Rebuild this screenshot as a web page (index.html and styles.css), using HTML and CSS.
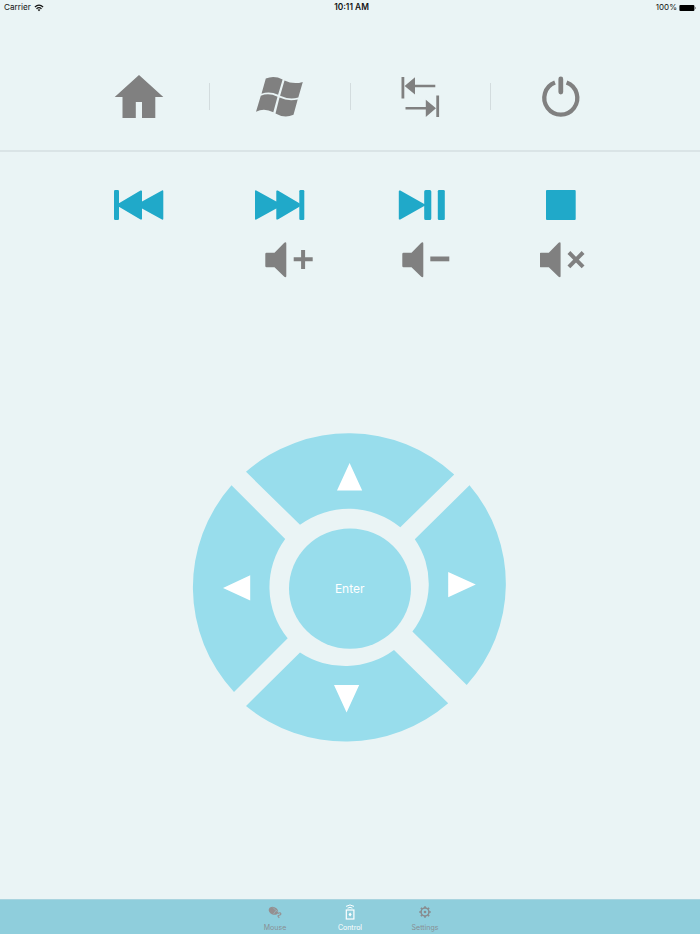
FILE: index.html
```html
<!DOCTYPE html>
<html lang="en">
<head>
<meta charset="utf-8">
<title>Remote Control</title>
<link rel="stylesheet" href="styles.css">
</head>
<body>
<div class="app">
  <header class="status">
    <div class="status-left"><span>Carrier</span>
      <svg class="wifi" viewBox="0 0 10 8"><g fill="none" stroke="#111" stroke-width="1.2"><path d="M.9 3Q5-.8 9.1 3M2.5 4.7Q5 2.4 7.5 4.7"/></g><path d="M3.6 5.8Q5 4.7 6.4 5.8L5 7.3z" fill="#111"/></svg>
    </div>
    <span class="time">10:11 AM</span>
    <div class="status-right"><span>100%</span>
      <svg class="battery" viewBox="0 0 18 8"><rect x=".4" y="1" width="15" height="6" rx="1"/><path d="M16 2.8q1.2 1.2 0 2.4z"/></svg>
    </div>
  </header>

  <nav class="toolbar">
    <button class="tool"><svg viewBox="0 0 50 44"><path d="M25 0L49.300 22H41.300V43H28V27H21.800V43H8.500V22H.7z"/></svg></button>
    <button class="tool"><svg viewBox="0 0 50 44"><path d="M10.800 3.600Q19 .2 27.600 4.400L23.100 19.800Q14.500 15.600 6.500 18.800z"/><path d="M29.500 5.500Q38.500 9.800 47.800 6.900L43.300 22.600Q34 25 25.100 20.800z"/><path d="M5.800 20.700Q14 17.500 22.500 21.700L18.300 37.300Q9.500 32.600 1 36.700z"/><path d="M24.500 22.600Q33.500 26.700 42.700 24.400L38.500 39.800Q29.500 43.800 20.500 38.500z"/></svg></button>
    <button class="tool"><svg viewBox="0 0 50 44"><path d="M5.500 2h2.800v21.500H5.500zM8.600 11l10.400-8.700V9.700h20.300v2.600H19v7.200zM40.300 20.500h2.800V42h-2.800zM9.500 32h20.300v-7.200l10.200 8.500-10.200 8.700v-7.400H9.500z"/></svg></button>
    <button class="tool"><svg viewBox="0 0 50 44"><path d="M19 7.600A16.500 16.500 0 1 0 30.600 7.600" fill="none" stroke="#808080" stroke-width="4.300"/><path d="M24.800 4v13" stroke="#808080" stroke-width="4.800" stroke-linecap="round"/></svg></button>
  </nav>

  <main class="remote">
    <section class="media">
      <button class="key"><svg viewBox="0 0 50 30"><rect width="5" height="30" rx="1.200"/><path d="M4.500 13.600L26.500.6Q28 0 28 1.300V11.500L48 .4Q49.300 0 49.300 1.300V28.700Q49.300 30 48 29.600L28 18.500V28.700Q28 30 26.500 29.400L4.500 16.400z"/></svg></button>
      <button class="key"><svg viewBox="0 0 50 30"><rect x="44.300" width="5" height="30" rx="1.200"/><path d="M44.800 13.600L22.800.6Q21.300 0 21.300 1.300V11.500L1.300.4Q0 0 0 1.300V28.700Q0 30 1.300 29.600L21.300 18.500V28.700Q21.300 30 22.800 29.400L44.800 16.400z"/></svg></button>
      <button class="key"><svg viewBox="0 0 50 30"><g transform="translate(.8)"><path d="M3 1.300Q3 0 4.500.6L28.400 14V1.500Q28.400 0 30 0h4q1.500 0 1.500 1.500v27q0 1.500-1.500 1.500h-4q-1.600 0-1.600-1.500V16L4.500 29.400Q3 30 3 28.700z"/><rect x="42" width="7" height="30" rx="1.300"/></g></svg></button>
      <button class="key"><svg viewBox="0 0 50 30"><rect x="10" width="29.700" height="30" rx="1"/></svg></button>
    </section>
    <section class="volume">
      <button class="vol"><svg viewBox="0 0 50 36"><path d="M1.500 10.800H9.500L19.300.7Q21.300-.4 21.300 1.500V34Q21.300 36 19.300 34.800L9.500 25.200H1.500Q.3 25.200.3 24V12Q.3 10.800 1.500 10.800z"/><path d="M28.700 17.200h19M38.100 8v19" class="sign"/></svg></button>
      <button class="vol"><svg viewBox="0 0 50 36"><path d="M1.500 10.800H9.500L19.300.7Q21.300-.4 21.300 1.500V34Q21.300 36 19.300 34.800L9.500 25.200H1.500Q.3 25.200.3 24V12Q.3 10.800 1.500 10.800z"/><path d="M28.300 16.900h19" class="sign minus"/></svg></button>
      <button class="vol"><svg viewBox="0 0 50 36"><g transform="translate(-.7)"><path d="M1.500 10.800H9.500L19.300.7Q21.300-.4 21.300 1.500V34Q21.300 36 19.300 34.800L9.500 25.200H1.500Q.3 25.200.3 24V12Q.3 10.800 1.500 10.800z"/><path d="M29.600 10.500L43.800 24.800M43.800 10.500L29.600 24.800" class="sign"/></g></svg></button>
    </section>

    <svg class="dpad" viewBox="190 430 320 316">
      <g fill="#98ddec">
        <path d="M246 471.800A156 156 0 0 1 454.200 474.500L400.300 527.200A82 82 0 0 0 300 524.800z"/>
        <path d="M231.500 485.300L285.200 539A81 81 0 0 0 287.700 638.200L234 692A154 154 0 0 1 231.500 485.300z"/>
        <path d="M469.500 485.300A151 151 0 0 1 466.700 685L412.400 631.500A78 78 0 0 0 414.800 539.200z"/>
        <path d="M300 652.500A82 82 0 0 0 394 650L448.200 703.200A157 157 0 0 1 246 706z"/>
        <ellipse cx="350" cy="588.600" rx="61" ry="60.100"/>
      </g>
      <path fill="#fff" d="M349.600 463L362.200 490.600H337zM223 588L250.200 575.300V600.500zM448.200 572V597.300L475.800 584.500zM334 685H359.200L346.600 712.600z"/>
      <text x="349.700" y="593" text-anchor="middle" class="enter">Enter</text>
    </svg>
  </main>

  <footer class="tabs">
    <a class="tab"><svg viewBox="0 0 16 16"><g fill="#958f90"><ellipse cx="6.500" cy="6.800" rx="5" ry="3.700" transform="rotate(25 6.500 6.800)"/><path d="M6 3.500L9 6.500L6.500 10M9 6.500L12 8" fill="none" stroke="#8fcedc" stroke-width=".5"/><path d="M10.800 9.500q2.500-1.500 3 0t-1.800 1.800 .3 2.400" fill="none" stroke="#958f90" stroke-width="1.100"/></g></svg><span>Mouse</span></a>
    <a class="tab active"><svg viewBox="0 0 16 16"><g fill="none" stroke="#fff"><path d="M4 2.400Q8-.5 12 2.400M5.600 4.200Q8 2.500 10.400 4.200" stroke-width="1"/><rect x="4.300" y="6" width="7.600" height="9" stroke-width="1.200"/></g><path d="M8.100 8.600l1.600 1.900-1.600 1.900-1.600-1.900z" fill="#fff"/></svg><span>Control</span></a>
    <a class="tab"><svg viewBox="0 0 16 16"><g fill="none" stroke="#888b8e"><circle cx="8" cy="8" r="3.900" stroke-width="1.500"/><path d="M8 2.200V4M8 12v1.800M2.200 8H4M12 8h1.800M3.900 3.900l1.300 1.300M10.800 10.800l1.300 1.300M3.900 12.100l1.300-1.300M10.800 5.200l1.300-1.300" stroke-width="1.700"/></g><circle cx="8" cy="8" r="1.300" fill="#888b8e"/></svg><span>Settings</span></a>
  </footer>
</div>
</body>
</html>
```
FILE: styles.css
```css
* { box-sizing: border-box; }
body {
  margin: 0;
  background: #eaf4f5;
  font-family: Inter, "Liberation Sans", sans-serif;
  color: #111;
}
button { border: 0; padding: 0; background: none; font: inherit; }
svg { display: block; }

.app { height: 934px; display: flex; flex-direction: column; }

.status {
  height: 15px;
  padding: 0 4px;
  display: grid;
  grid-template-columns: 1fr auto 1fr;
  align-items: center;
  font-size: 8.2px;
  line-height: 15px;
}
.status-left, .status-right { display: flex; align-items: center; }
.status-left { gap: 3px; }
.status-right { justify-content: flex-end; gap: 2px; font-size: 8px; }
.time { font-weight: 600; font-size: 8.4px; padding-left: 3px; }
.wifi { width: 10px; height: 8px; }
.battery { width: 18px; height: 8px; margin-right: -1px; }

.toolbar {
  height: 137px;
  padding: 68px 69px 0 68.5px;
  display: grid;
  grid-template-columns: repeat(4, 1fr);
  align-items: start;
  border-bottom: 2px solid #dae4e6;
}
.tool {
  height: 27px;
  display: flex;
  align-items: center;
  justify-content: center;
}
.tool + .tool { border-left: 1px solid #d3dcde; }
.tool svg { width: 50px; height: 44px; flex: none; fill: #808080; }

.remote { flex: 1; display: flex; flex-direction: column; }
.media {
  padding: 38px 69px 0;
  display: grid;
  grid-template-columns: repeat(4, 1fr);
  justify-items: center;
}
.key svg { width: 50px; height: 30px; fill: #20a9c9; }
.volume {
  padding: 22px 0 0 265px;
  display: grid;
  grid-template-columns: repeat(3, 137.3px);
  justify-items: start;
}
.vol svg { width: 50px; height: 36px; fill: #808080; }
.sign { fill: none; stroke: #808080; stroke-width: 4; }
.minus { stroke-width: 4.8; }

.dpad { width: 320px; height: 316px; margin: 152px 0 0 190px; }
.enter { font-size: 12px; fill: #fff; }

.tabs {
  height: 35px;
  display: flex;
  justify-content: center;
  background: #8fcedc;
  border-top: 1px solid #a9d4df;
}
.tab {
  width: 75px;
  padding-top: 4px;
  display: flex;
  flex-direction: column;
  align-items: center;
  gap: 4px;
  font-size: 7px;
  line-height: 8px;
  color: #888f94;
}
.tab svg { width: 16px; height: 16px; }
.tab.active { color: #fff; }
```
